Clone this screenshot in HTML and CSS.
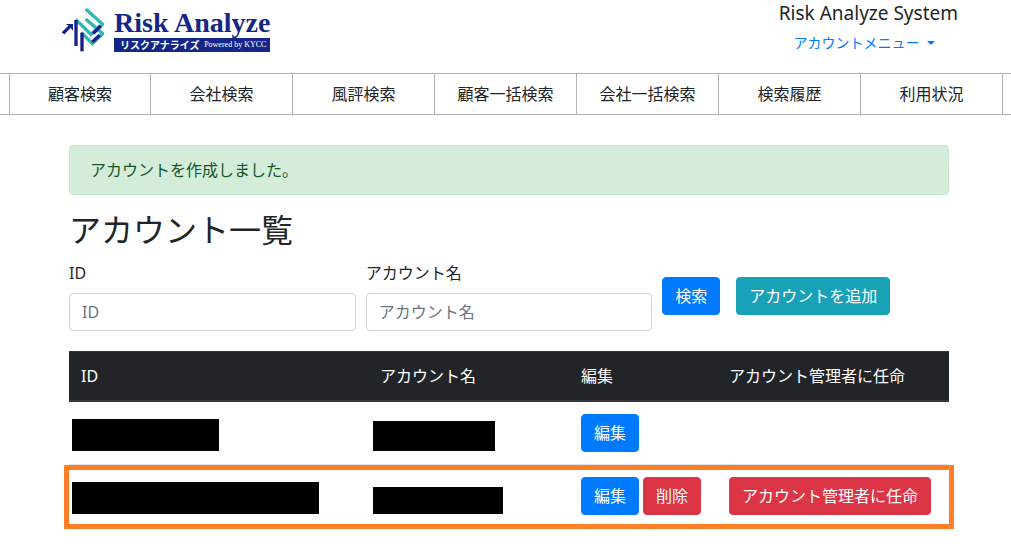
FILE: index.html
```html
<!DOCTYPE html>
<html lang="ja">
<head>
<meta charset="utf-8">
<meta name="viewport" content="width=device-width, initial-scale=1">
<title>アカウント一覧 | Risk Analyze System</title>
<link rel="stylesheet" href="styles.css">
</head>
<body>
<header class="header">
  <a class="logo" href="#">
    <svg class="logo-mark" viewBox="21 21 126 138" fill="none" stroke-width="10" aria-hidden="true">
      <g stroke="#33b5b5">
        <path d="M92 27 143 73 116 99"/>
        <path d="M92 57 143 101 112 131 79 98"/>
        <path d="M62 58 108 103 136 76"/>
      </g>
      <g stroke="#17218c">
        <path d="M24 100 47 77"/>
        <path d="M63 60V138"/>
        <path d="M81 98V154"/>
        <path d="M114 100 137 78"/>
        <path d="M112 126 134 106"/>
      </g>
      <path d="M33 72H54V92L47 84 41 78Z" fill="#17218c"/>
    </svg>
    <span class="logo-text">
      <span class="logo-name">Risk Analyze</span>
      <span class="logo-band"><span class="logo-kana">リスクアナライズ</span><span class="logo-by">Powered by KYCC</span></span>
    </span>
  </a>
  <div class="account">
    <div class="account-name">Risk Analyze System</div>
    <button class="account-menu" type="button">アカウントメニュー<span class="caret"></span></button>
  </div>
</header>
<nav class="nav">
  <a href="#">顧客検索</a>
  <a href="#">会社検索</a>
  <a href="#">風評検索</a>
  <a href="#">顧客一括検索</a>
  <a href="#">会社一括検索</a>
  <a href="#">検索履歴</a>
  <a href="#">利用状況</a>
</nav>
<main class="main">
  <div class="alert" role="status">アカウントを作成しました。</div>
  <h1 class="title">アカウント一覧</h1>
  <form class="search">
    <div class="field">
      <label for="account-id">ID</label>
      <input id="account-id" type="text" placeholder="ID">
    </div>
    <div class="field">
      <label for="account-name">アカウント名</label>
      <input id="account-name" type="text" placeholder="アカウント名">
    </div>
    <div class="search-actions">
      <button class="btn btn-primary" type="button">検索</button>
      <button class="btn btn-info" type="button">アカウントを追加</button>
    </div>
  </form>
  <table class="table">
    <colgroup>
      <col>
      <col class="col-name">
      <col class="col-edit">
      <col class="col-admin">
    </colgroup>
    <thead>
      <tr><th>ID</th><th>アカウント名</th><th>編集</th><th>アカウント管理者に任命</th></tr>
    </thead>
    <tbody>
      <tr>
        <td class="masked"><span class="mask mask-id"></span></td>
        <td class="masked masked-name"><span class="mask mask-name"></span></td>
        <td><div class="actions"><button class="btn btn-primary" type="button">編集</button></div></td>
        <td></td>
      </tr>
      <tr class="highlight">
        <td class="masked"><span class="mask mask-id-long"></span></td>
        <td class="masked masked-name"><span class="mask mask-name-long"></span></td>
        <td><div class="actions"><button class="btn btn-primary" type="button">編集</button><button class="btn btn-danger" type="button">削除</button></div></td>
        <td><div class="actions"><button class="btn btn-danger" type="button">アカウント管理者に任命</button></div></td>
      </tr>
    </tbody>
  </table>
</main>
</body>
</html>
```
FILE: styles.css
```css
*, *::before, *::after { box-sizing: border-box; }

body {
  margin: 0;
  background: #fff;
  color: #212529;
  font-family: "Noto Sans", "Noto Sans CJK JP", sans-serif;
  font-size: 16px;
  line-height: 24px;
}

button, input { font: inherit; }

.header {
  display: flex;
  justify-content: space-between;
  align-items: flex-start;
  height: 73px;
  padding: 0 53px 0 62px;
}

.logo {
  display: flex;
  gap: 10px;
  padding-top: 7px;
  color: #142789;
  text-decoration: none;
}

.logo-mark { width: 42px; height: 46px; }

.logo-text { display: flex; flex-direction: column; }

.logo-name {
  font: bold 28px/31px "Liberation Serif", serif;
  white-space: nowrap;
}

.logo-band {
  display: flex;
  justify-content: space-between;
  align-items: center;
  height: 14px;
  padding: 0 4px 0 6px;
  background: #142789;
  color: #fff;
  line-height: 14px;
  white-space: nowrap;
}

.logo-kana { font-size: 10px; font-weight: bold; }

.logo-by { font-family: "Liberation Serif", serif; font-size: 8px; }

.account {
  display: flex;
  flex-direction: column;
  align-items: center;
  gap: 6px;
  padding-top: 1px;
}

.account-name { font-size: 19px; }

.account-menu {
  display: flex;
  align-items: center;
  gap: 8px;
  padding: 0 8px 0 0;
  border: 0;
  background: none;
  color: #007bff;
  font-size: 14px;
}

.caret {
  border: 4px solid transparent;
  border-top-color: currentColor;
  border-bottom: 0;
}

.nav {
  display: grid;
  grid-template-columns: repeat(7, 1fr);
  padding: 0 8px 0 9px;
  border-top: 1px solid #b3b3b3;
  border-bottom: 1px solid #b3b3b3;
}

.nav a {
  padding: 8px 0;
  border-right: 1px solid #b3b3b3;
  color: #212529;
  text-align: center;
  text-decoration: none;
}

.nav a:first-child { border-left: 1px solid #b3b3b3; }

.main { padding: 30px 62px 22px 69px; }

.alert {
  padding: 12px 20px;
  border: 1px solid #c3e6cb;
  border-radius: 4px;
  background: #d4edda;
  color: #155724;
}

.title {
  margin: 16px 0 12px;
  font-size: 32px;
  font-weight: 400;
  line-height: 38px;
}

.search {
  display: grid;
  grid-template-columns: repeat(3, minmax(0, 1fr));
  align-items: center;
  gap: 10px;
  margin-bottom: 20px;
}

.field { display: grid; gap: 8px; }

.field input {
  width: 100%;
  height: 38px;
  padding: 6px 12px;
  border: 1px solid #ced4da;
  border-radius: 4px;
  background: #fff;
  color: #495057;
}

.field input::placeholder { color: #6c757d; opacity: 1; }

.search-actions { display: flex; gap: 16px; }

.btn {
  padding: 6px 12px;
  border: 1px solid transparent;
  border-radius: 4px;
  color: #fff;
  line-height: 24px;
  white-space: nowrap;
}

.btn-primary { background: #007bff; border-color: #007bff; }
.btn-info { background: #17a2b8; border-color: #17a2b8; }
.btn-danger { background: #dc3545; border-color: #dc3545; }

.table {
  width: 100%;
  table-layout: fixed;
  border-collapse: collapse;
}

.col-name { width: 201px; }
.col-edit { width: 148px; }
.col-admin { width: 232px; }

.table th, .table td {
  padding: 12px;
  border-top: 1px solid #dee2e6;
  text-align: left;
}

.table th {
  border-top-color: #32383e;
  border-bottom: 2px solid #32383e;
  background: #212529;
  color: #fff;
  font-weight: 400;
}

.actions { display: flex; gap: 4px; }

.table .masked { padding: 0 0 13px 3px; vertical-align: bottom; }
.table .masked-name { padding-left: 5px; }

.mask { display: block; background: #000; }
.mask-id { width: 147px; height: 32px; }
.mask-name { width: 122px; height: 30px; }
.mask-id-long { width: 247px; height: 32px; }
.mask-name-long { width: 130px; height: 27px; }

.highlight { position: relative; }

.highlight td:first-child::after {
  content: "";
  position: absolute;
  inset: 0 -5px -2px;
  border: 5px solid #ff7f27;
  pointer-events: none;
}
```
